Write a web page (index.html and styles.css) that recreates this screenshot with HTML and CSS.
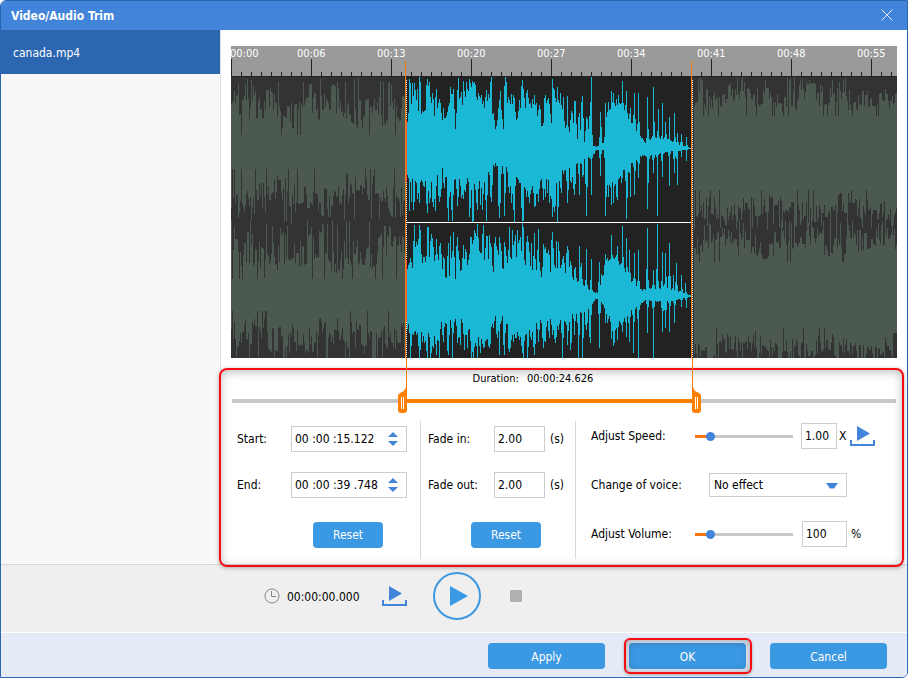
FILE: index.html
```html
<!DOCTYPE html>
<html lang="en">
<head>
<meta charset="utf-8">
<title>Video/Audio Trim</title>
<link rel="stylesheet" href="styles.css">
</head>
<body>
<div class="window">
  <header class="titlebar">
    <h1>Video/Audio Trim</h1>
    <button class="close" type="button" aria-label="Close">
      <svg width="12" height="12" viewBox="0 0 12 12"><path d="M.5.5l11 11M11.5.5l-11 11" fill="none" stroke="#e6effb"/></svg>
    </button>
  </header>
  <div class="body">
    <nav class="sidebar"><a class="file" href="#canada">canada.mp4</a></nav>
    <main class="editor">
      <div class="timeline">
        <div class="ruler">
          <span>00:00</span><span>00:06</span><span>00:13</span><span>00:20</span><span>00:27</span><span>00:34</span><span>00:41</span><span>00:48</span><span>00:55</span>
        </div>
        <svg class="wave" viewBox="0 0 666 282" preserveAspectRatio="none" shape-rendering="crispEdges" aria-hidden="true">
          <rect width="666" height="282" fill="#333"/>
          <rect x="176" y="1" width="285" height="281" fill="#222"/>
          <path id="wave-muted" fill="#4c5950"/>
          <path id="wave-active" fill="#1ab8d5"/>
          <rect width="666" height="1" fill="#222"/>
          <rect x="176" y="146" width="285" height="1" fill="#fff"/>
          <path d="M175.5 4V282M461.5 4V282" stroke="#fff" stroke-dasharray="1 1"/>
          <path d="M175.5 44V105M175.5 184V246" stroke="#ff5540"/>
        </svg>
        <div class="marker marker-start"></div>
        <div class="marker marker-end"></div>
      </div>
      <section class="panel">
        <p class="duration"><span>Duration:</span><output>00:00:24.626</output></p>
        <div class="trim">
          <input type="range" min="0" max="655" value="166" aria-label="Trim start">
          <input class="trim-end" type="range" min="0" max="655" value="460" aria-label="Trim end">
        </div>
        <div class="settings">
          <div class="group times">
            <div class="row"><label for="start">Start:</label>
              <div class="spin"><input id="start" type="text" value="00 :00 :15.122">
                <div class="steps"><button type="button" aria-label="Increase start"><svg width="10" height="5"><path d="M0 5L5 0l5 5z" fill="#4284d9"/></svg></button><button type="button" aria-label="Decrease start"><svg width="10" height="5"><path d="M0 0h10L5 5z" fill="#4284d9"/></svg></button></div>
              </div>
            </div>
            <div class="row"><label for="end">End:</label>
              <div class="spin"><input id="end" type="text" value="00 :00 :39 .748">
                <div class="steps"><button type="button" aria-label="Increase end"><svg width="10" height="5"><path d="M0 5L5 0l5 5z" fill="#4284d9"/></svg></button><button type="button" aria-label="Decrease end"><svg width="10" height="5"><path d="M0 0h10L5 5z" fill="#4284d9"/></svg></button></div>
              </div>
            </div>
            <button class="btn reset" type="button">Reset</button>
          </div>
          <div class="group fades">
            <div class="row"><label for="fadein">Fade in:</label><input id="fadein" class="box" type="text" value="2.00"><span>(s)</span></div>
            <div class="row"><label for="fadeout">Fade out:</label><input id="fadeout" class="box" type="text" value="2.00"><span>(s)</span></div>
            <button class="btn reset" type="button">Reset</button>
          </div>
          <div class="group effects">
            <div class="row"><label for="speed">Adjust Speed:</label><input id="speed" class="slider" type="range" min="0" max="100" value="12"><input class="box speed-box" type="text" value="1.00" aria-label="Speed"><span>X</span>
              <button class="icon" type="button" aria-label="Preview speed"><svg width="25" height="20" viewBox="0 0 25 20"><path d="M7 0l13 7.500L7 15z" fill="#4284d9"/><path d="M1 14v5h23v-5" fill="none" stroke="#4284d9" stroke-width="2"/></svg></button>
            </div>
            <div class="row"><label for="voice">Change of voice:</label>
              <div class="select"><select id="voice"><option>No effect</option></select><svg width="12" height="6"><path d="M0 0h12L8 5.500H4z" fill="#4284d9"/></svg></div>
            </div>
            <div class="row"><label for="volume">Adjust Volume:</label><input id="volume" class="slider" type="range" min="0" max="100" value="12"><input class="box volume-box" type="text" value="100" aria-label="Volume"><span class="percent">%</span></div>
          </div>
        </div>
      </section>
    </main>
  </div>
  <div class="player">
    <svg class="clock" width="16" height="16" viewBox="0 0 16 16"><circle cx="8" cy="8" r="7" fill="none" stroke="#858585"/><path d="M7.500 3v5.500H12" fill="none" stroke="#858585"/></svg>
    <output class="position">00:00:00.000</output>
    <button class="icon preview" type="button" aria-label="Preview clip"><svg width="25" height="20" viewBox="0 0 25 20"><path d="M7 0l13 7.500L7 15z" fill="#4284d9"/><path d="M1 14v5h23v-5" fill="none" stroke="#4284d9" stroke-width="2"/></svg></button>
    <button class="icon play" type="button" aria-label="Play"><svg width="48" height="48" viewBox="0 0 48 48"><circle cx="24" cy="24" r="23" fill="none" stroke="#3b98e3" stroke-width="2"/><path d="M17 14l18 10-18 10z" fill="#3b98e3"/></svg></button>
    <button class="icon" type="button" aria-label="Stop"><svg width="12" height="12"><rect width="12" height="12" rx="1" fill="#b0b0b0"/></svg></button>
  </div>
  <footer class="actions">
    <button class="btn" type="button">Apply</button>
    <span class="primary"><button class="btn" type="button">OK</button></span>
    <button class="btn" type="button">Cancel</button>
  </footer>
</div>
<script src="wave.js"></script>
</body>
</html>
```
FILE: styles.css
```css
* { box-sizing: border-box; }
body { margin: 0; font: 12px/16px "DejaVu Sans Condensed", "DejaVu Sans", sans-serif; color: #000; }
button, input, select { font: inherit; color: inherit; margin: 0; }
button { padding: 0; border: 0; background: none; }
svg { display: block; }

.window { display: flex; flex-direction: column; min-height: 100vh; border: 1px solid #2c65b0; border-radius: 6px 0 6px 0; background: #fff; overflow: hidden; }
.titlebar { display: flex; align-items: center; justify-content: space-between; height: 29px; padding: 0 14px 2px 10px; background: #4284d9; color: #fff; }
.titlebar h1 { margin: 0; padding-top: 2px; font-size: 12px; line-height: 16px; font-weight: bold; }
.body { display: grid; grid-template-columns: 220px minmax(0, 1fr); flex: 1; }
.sidebar { border-right: 1px solid #ddd; background: #f7f7f7; }
.file { display: flex; align-items: center; height: 44px; padding: 2px 0 0 12px; background: #2c65b0; color: #fff; text-decoration: none; }

.editor { display: flex; flex-direction: column; padding-top: 16px; }
.timeline { position: relative; z-index: 1; margin: 0 10px; }
.ruler { display: flex; height: 30px; overflow: hidden; color: #fff; font-size: 11px; line-height: 15px;
  background: repeating-linear-gradient(90deg, #222 0 1px, transparent 1px 80px) 0 13px / 100% 17px no-repeat,
    repeating-linear-gradient(90deg, #222 0 1px, transparent 1px 10px) 0 26px / 100% 4px no-repeat, #9a9a9a; }
.ruler span { flex: 0 0 80px; text-indent: -14px; }
.ruler span:first-child { text-indent: -1px; }
.wave { width: 100%; height: 282px; }
.marker { position: absolute; top: 15px; bottom: -30px; width: 2px;
  background: linear-gradient(#f27c0c, #f27c0c) 0 0 / 1px 297px no-repeat, linear-gradient(#f27c0c, #f27c0c) 1px 297px / 1px 30px no-repeat; }
.marker-start { left: 26.200%; }
.marker-end { left: 69.100%; }

.panel { position: relative; flex: 1; padding: 13px 11px 5px; }
.panel::after { content: ""; position: absolute; inset: 10px 3px -3px -2px; border: 2px solid #f60d12; border-radius: 8px; box-shadow: inset 0 2px 10px rgba(0, 0, 0, .25), 0 1px 4px rgba(0, 0, 0, .3); pointer-events: none; }
.duration { display: flex; justify-content: center; gap: 8px; margin: 0; font-size: 11px; }
.duration span { margin-left: -62px; }
.trim { position: relative; height: 26px; margin-bottom: 8px;
  background: linear-gradient(90deg, #c8c8c8 0 26%, #ff8000 26% 70%, #c8c8c8 70%) 0 12px / 100% 4px no-repeat; }
.trim input { position: absolute; left: 0; top: 0; width: 100%; height: 26px; appearance: none; background: none; pointer-events: none; }
.trim input::-webkit-slider-thumb { appearance: none; width: 9px; height: 26px; pointer-events: auto; border-radius: 0 0 3px 3px;
  background: linear-gradient(90deg, transparent 3px, #fff 3px 4px, transparent 4px 5px, #fff 5px 6px, transparent 6px) 0 10px / 9px 12px no-repeat, #ff8000;
  clip-path: polygon(9px 0, 9px 100%, 0 100%, 0 8px, 2px 6px, 6px 4px, 8px 0); }
.trim .trim-end::-webkit-slider-thumb { clip-path: polygon(0 0, 1px 0, 3px 4px, 7px 6px, 9px 8px, 9px 100%, 0 100%); }

.settings { display: grid; grid-template-columns: 188px 155px minmax(0, 1fr); min-height: 138px; }
.group { display: flex; flex-direction: column; }
.group + .group { border-left: 1px solid #d8d8d8; }
.row { display: flex; align-items: center; height: 26px; }
.times, .fades { gap: 20px; padding-top: 5px; }
.times { padding-left: 5px; }
.times label { flex: 0 0 54px; }
.spin { display: flex; flex: 0 0 116px; align-items: center; height: 26px; padding: 0 8px 0 3px; border: 1px solid #cdcdcd; background: #fff; }
.spin input { width: 93px; padding: 0; border: 0; background: none; outline: 0; }
.steps { display: flex; flex-direction: column; gap: 4px; }
.fades { padding-left: 7px; }
.fades label { flex: 0 0 66px; }
.box { width: 51px; height: 26px; padding: 0 3px; border: 1px solid #cdcdcd; background: #fff; outline: 0; }
.fades span { margin-left: 5px; }
.btn { height: 26px; border-radius: 4px; background: #3b98e3; color: #fff; }
.reset { width: 70px; margin-top: 4px; }
.times .reset { margin-left: 76px; }
.fades .reset { margin-left: 43px; }

.effects { gap: 23px; padding: 2px 0 0 15px; }
.effects label { flex: 0 0 104px; }
.slider { width: 98px; height: 16px; appearance: none; background: linear-gradient(90deg, #f87412 0 15px, #c8c8c8 15px) 0 7px / 100% 3px no-repeat; }
.slider::-webkit-slider-thumb { appearance: none; width: 9px; height: 9px; border-radius: 50%; background: #4284d9; }
.speed-box { width: 36px; margin-left: 8px; }
.volume-box { width: 45px; margin-left: 9px; }
.effects .row span { margin-left: 2px; }
.effects .row .percent { margin-left: 4px; }
.effects .icon { margin-left: 4px; }
.select { position: relative; margin-left: 14px; width: 138px; }
.select select { width: 100%; height: 24px; padding: 0 4px; border: 1px solid #cdcdcd; border-radius: 0; appearance: none; background: #fff; }
.select svg { position: absolute; right: 9px; top: 10px; pointer-events: none; }

.player { display: flex; align-items: center; height: 68px; padding: 0 0 6px 263px; border-top: 1px solid #d5d5d5; background: #efefef; }
.position { flex: 0 0 95px; margin-left: 7px; padding-top: 2px; }
.play { margin: 0 29px 0 26px; }
.actions { display: flex; justify-content: flex-end; gap: 24px; padding: 10px 20px 8px; border-top: 1px solid #fff; background: #e4eaf6; }
.actions .btn { width: 117px; padding-top: 2px; }
.primary { position: relative; }
.primary::after { content: ""; position: absolute; inset: -5px -6px -5px -5px; border: 2px solid #f60d12; border-radius: 6px; box-shadow: inset 0 1px 8px rgba(0, 0, 0, .3), 0 1px 3px rgba(0, 0, 0, .3); pointer-events: none; }
```
FILE: wave.js
```js
// Peaks of the selected clip. Each pair is "x:peak"; units are thirds of a pixel.
const parse = s => s.split(",").map(p => p.split(":").map(Number));
const active = [
  { top: -36, center: 325,
    solid: "20:260,40:200,60:220,90:200,110:240,125:270,145:210,165:265,180:190,200:190,215:205,250:190,270:240,285:275,300:180,310:270,320:190,350:240,380:200,425:255,445:190,453:260,460:190,480:210,500:275,530:300,560:310,588:320,610:310,620:220,640:190,680:230,720:290,735:308,760:290,800:300,850:318,874:325",
    peaks: "28:118,31:130,37:128,43:130,53:148,58:108,68:212,81:118,88:125,96:158,105:172,108:148,118:178,121:190,130:203,148:188,151:142,157:162,160:148,172:150,175:115,184:155,190:122,199:125,208:118,217:122,220:128,223:125,226:135,235:160,244:165,259:150,265:162,274:110,280:220,298:180,301:152,316:110,325:172,334:162,340:165,343:175,358:180,367:120,370:148,382:150,391:190,397:178,403:165,409:190,418:195,436:165,445:175,457:118,460:145,463:150,472:140,475:180,481:160,490:170,502:168,514:212,523:183,526:183,538:218,547:168,559:232,562:237,574:110,571:185,601:215,604:260,616:190,625:185,634:152,640:160,649:178,655:165,667:122,679:152,691:205,703:158,715:160,718:245,742:170,760:140,775:208,787:188,796:245,808:230,823:218,826:290,832:278,844:282,859:290" },
  { top: -36, center: 325,
    solid: "20:395,60:420,100:430,125:380,150:420,180:420,210:400,250:420,287:370,310:380,340:410,370:420,420:430,460:400,500:390,540:360,575:350,588:330,610:330,620:420,640:430,665:400,700:360,730:345,760:345,800:335,874:327",
    peaks: "28:512,34:485,40:510,52:478,58:490,73:440,82:518,88:490,100:502,106:512,118:485,121:470,133:445,145:542,148:470,154:510,157:542,172:498,184:475,190:478,196:455,208:532,217:545,220:542,229:490,232:510,241:495,247:510,259:542,271:470,274:485,298:535,301:490,313:528,328:460,334:490,343:545,358:430,367:542,370:542,379:470,388:488,394:450,403:500,406:498,415:485,430:480,436:470,442:460,448:490,457:530,463:515,472:545,475:500,484:460,502:490,514:430,523:465,538:465,547:410,559:528,574:465,601:408,616:527,619:470,625:470,634:495,640:490,649:470,652:480,664:430,679:536,682:475,691:470,703:465,715:415,742:508,745:430,760:400,772:528,787:410,808:438,832:435,823:400,844:352,859:362" },
  { top: 139, center: 243,
    solid: "20:160,60:150,100:130,140:190,170:190,210:130,240:110,280:180,310:155,350:150,400:160,430:185,480:160,510:190,550:210,580:232,595:232,615:150,640:135,660:150,690:195,725:225,760:220,800:220,850:235,874:241",
    peaks: "31:128,43:30,49:80,58:30,61:45,70:125,82:35,85:36,94:58,97:70,109:72,118:92,121:85,130:125,145:85,151:62,157:108,160:50,172:65,178:135,190:90,196:102,211:66,214:66,223:45,232:26,241:115,250:30,259:62,262:62,268:60,274:95,286:65,292:105,298:65,301:85,313:80,316:95,328:35,337:45,346:60,352:45,358:75,361:65,367:24,370:36,382:62,385:80,394:85,403:55,415:42,418:140,430:88,436:95,445:105,457:52,463:150,469:78,475:80,490:122,502:92,511:138,526:155,538:92,544:143,559:102,574:133,598:140,604:178,616:118,622:130,634:60,640:130,652:92,667:32,679:68,688:105,703:115,715:104,742:38,772:26,760:165,787:110,796:115,808:85,820:180,829:143,844:180,856:203" },
  { top: 139, center: 243,
    solid: "20:330,60:340,100:350,140:315,180:310,220:370,260:370,280:310,310:310,340:360,380:350,430:310,480:320,520:300,560:285,588:250,610:270,640:340,680:300,720:270,735:255,770:260,800:260,874:245",
    peaks: "31:428,40:360,49:360,58:428,67:380,73:385,82:428,91:428,100:400,109:420,118:428,130:380,145:420,157:428,172:385,181:390,193:405,202:400,214:428,220:428,232:428,241:415,250:400,259:375,268:400,280:340,292:370,298:420,313:420,328:410,331:400,340:380,346:370,358:375,367:415,370:428,382:428,394:375,403:420,415:380,430:398,436:380,448:370,457:360,466:385,475:345,487:428,502:390,511:405,523:360,535:428,547:428,559:345,571:385,598:400,616:325,622:325,634:372,640:392,643:385,652:375,667:350,679:365,688:380,700:415,715:428,742:355,760:428,787:350,796:340,808:350,823:325,844:275,859:280" }
];

let seed = 7;
const noise = () => (seed = (seed * 16807) % 2147483647) / 2147483647;
const bar = (x, a, b) => `M${x} ${Math.round(Math.min(a, b))}h1V${Math.round(Math.max(a, b))}h-1z`;
const interpolate = (points, x) => {
  const i = points.findIndex(p => p[0] >= x);
  if (i <= 0) return points[i < 0 ? points.length - 1 : 0][1];
  const [x0, y0] = points[i - 1], [x1, y1] = points[i];
  return y0 + (y1 - y0) * (x - x0) / (x1 - x0);
};

let path = "";
for (const side of active) {
  const solid = parse(side.solid);
  const peaks = new Map(parse(side.peaks).map(([x, y]) => [Math.floor(x / 3), y]));
  for (let c = 7; c < 292; c++) {
    let y = interpolate(solid, c * 3);
    y += (side.center - y) * (noise() - .6) * .25;
    const beside = peaks.get(c - 1) ?? peaks.get(c + 1);
    if (peaks.has(c)) y = peaks.get(c);
    else if (beside !== undefined && c < 190) y += (beside - y) * .9 * noise();
    else if (beside !== undefined) y += (beside - y) * .35 * noise();
    path += bar(c + 169, side.center / 3 + side.top, y / 3 + side.top);
  }
}
document.getElementById("wave-active").setAttribute("d", path);

// Muted audio before and after the selection, as [inner edge, outer edge, center] per band.
let muted = "";
const fill = (from, to, bands) => {
  bands.forEach(([near, far, center], i) => {
    let level = .5;
    for (let x = from; x < to; x++) {
      const swell = Math.sin(x / 13 + i) * .12 + Math.sin(x / 5.3 + i * 2) * .08;
      if (noise() < .75) level = .1 + noise() * .65;
      const spike = noise();
      let t = level + swell;
      if (spike > .9) t = .85 + noise() * .15;
      if (spike < .05) t = -.1;
      muted += bar(x, center, near + (far - near) * Math.min(1, t));
    }
  });
};
fill(0, 174, [[54, 2, 72], [98, 148, 72], [198, 144, 220], [240, 288, 220]]);
fill(463, 666, [[36, 0, 72], [118, 154, 72], [182, 144, 220], [256, 294, 220]]);
document.getElementById("wave-muted").setAttribute("d", muted);
```
